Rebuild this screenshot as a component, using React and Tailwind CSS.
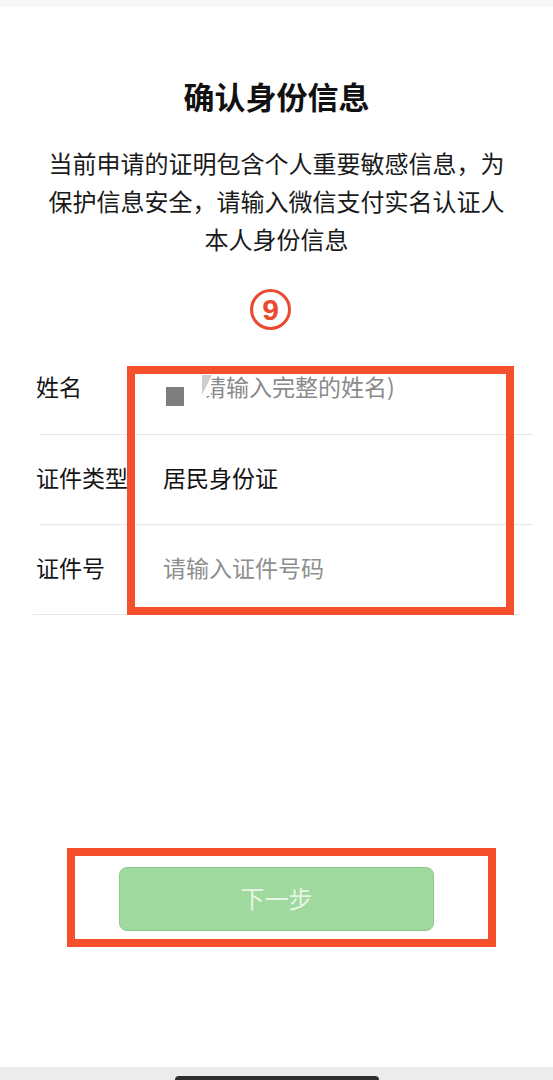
export default function App() {
    const cjk = { fontFamily: '"Noto Sans CJK SC", "Noto Sans", sans-serif' }

    return (
        <div className="min-h-[1080px] flex flex-col bg-white text-[#151515]" style={cjk}>
            {/* status strip */}
            <div className="h-[7px] bg-[#f8f8f8]" />

            <h1 className="mt-[69px] text-center text-[31px] leading-[40px] font-bold text-[#111]">确认身份信息</h1>

            <p className="mt-[28px] text-center text-[24px] leading-[38px] text-[#1a1a1a]">
                <span className="block">当前申请的证明包含个人重要敏感信息，为</span>
                <span className="block">保护信息安全，请输入微信支付实名认证人</span>
                <span className="block">本人身份信息</span>
            </p>

            {/* step marker */}
            <div className="mt-[31px] mx-auto w-[41px] h-[41px] rounded-full border-[3px] border-[#ea4a30] flex items-center justify-center translate-x-[-6px]">
                <span className="text-[30px] leading-none font-bold text-[#ea4a30]" style={{ fontFamily: '"Liberation Sans", Arial, sans-serif' }}>9</span>
            </div>

            {/* form */}
            <div className="relative mt-[14px]">
                <div className="flex items-center h-[90px] pb-[6px]">
                    <div className="w-[163px] pl-[36px] text-[23px]">姓名</div>
                    <div className="flex items-center">
                        <div className="ml-[3px] mt-[20px] w-[18px] h-[19px] bg-[#7e7e7e]" />
                        <div className="relative ml-[19px] text-[23px] text-[#8a8a8a]">
                            请输入完整的姓名)
                            <svg className="absolute left-[-1px] top-[6px]" width="11" height="21" viewBox="0 0 11 21">
                                <rect x="0" y="0" width="9" height="21" fill="#fff" />
                                <polygon points="0,0 10,0 0,20" fill="#cdcdcd" />
                            </svg>
                        </div>
                    </div>
                </div>
                <div className="ml-[40px] mr-[20px] h-px bg-[#e6e6e6]" />

                <div className="flex items-center h-[89px] pb-[5px]">
                    <div className="w-[163px] pl-[36px] text-[23px]">证件类型</div>
                    <div className="text-[23px] text-[#111]">居民身份证</div>
                </div>
                <div className="ml-[40px] mr-[20px] h-px bg-[#e6e6e6]" />

                <div className="flex items-center h-[89px] pb-[5px]">
                    <div className="w-[163px] pl-[36px] text-[23px]">证件号</div>
                    <div className="text-[23px] text-[#8e8e8e]">请输入证件号码</div>
                </div>
                <div className="ml-[33px] mr-[33px] h-px bg-[#e6e6e6]" />

                {/* annotation box */}
                <div className="absolute left-[127px] top-[22px] w-[387px] h-[249px] border-[8px] border-[#f5502b]" />
            </div>

            {/* next step */}
            <div className="mt-[233px] ml-[67px] w-[429px] h-[99px] border-[8px] border-[#f5502b]">
                <button className="ml-[44px] mt-[11px] w-[315px] h-[64px] rounded-[8px] bg-[#9fd99d] border border-[#8fc98c] text-[24px] text-[#e6f5e4] pb-[2px]">
                    下一步
                </button>
            </div>

            <div className="flex-1" />

            {/* home indicator */}
            <div className="h-[13px] bg-[#ececec] flex justify-center pt-[9px]">
                <div className="w-[204px] h-[4px] rounded-t-full bg-[#2e2e2e]" />
            </div>
        </div>
    )
}
